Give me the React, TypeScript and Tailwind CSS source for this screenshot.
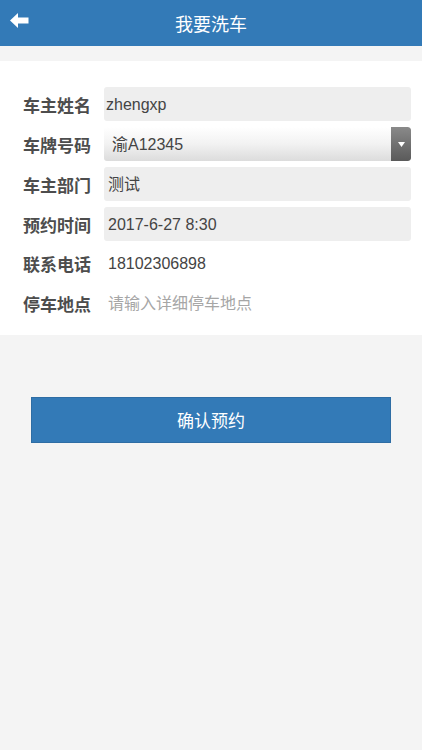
import React from "react";

const font = { fontFamily: '"Noto Sans CJK SC", "Noto Sans", sans-serif' };
const valFont = { fontFamily: '"Liberation Sans", "Noto Sans CJK SC", sans-serif' };

function Row({ label, children, className = "" }: { label: string; children: React.ReactNode; className?: string }) {
  return (
    <div className={`flex items-center h-[34px] ${className}`}>
      <div className="w-[81px] shrink-0 text-[17px] font-bold text-[#4d4d4d] leading-none">{label}</div>
      {children}
    </div>
  );
}

export default function App() {
  return (
    <div className="w-[422px] h-[750px] bg-[#f4f4f4] flex flex-col" style={font}>
      <div className="h-[46px] bg-[#337ab7] flex items-center relative shrink-0">
        <svg className="absolute left-[10px] top-[13px]" width="19" height="15" viewBox="0 0 19 15">
          <path d="M0 7.5 L8 0 L8 4.5 L18.5 4.5 L18.5 10.5 L8 10.5 L8 15 Z" fill="#fff" />
        </svg>
        <div className="flex-1 text-center text-white text-[18px] leading-none">我要洗车</div>
      </div>
      <div className="mt-[15px] bg-white h-[274px] pl-[23px] pr-[11px] pt-[26px] flex flex-col gap-[6px]">
        <Row label="车主姓名">
          <div className="flex-1 h-[34px] bg-[#eeeeee] rounded-[3px] flex items-center pl-[2px] pt-[2px] text-[16px] text-[#444]" style={valFont}>zhengxp</div>
        </Row>
        <Row label="车牌号码">
          <div className="flex-1 h-[34px] rounded-[3px] flex items-stretch overflow-hidden bg-gradient-to-b from-[#ffffff] via-[#f2f2f2] to-[#dcdcdc]">
            <div className="flex-1 flex items-center pl-[8px] pt-[2px] text-[16px] text-[#444]" style={valFont}>渝A12345</div>
            <div className="w-[20px] bg-gradient-to-b from-[#8a8a8a] to-[#5a5a5a] rounded-r-[3px] flex items-center justify-center">
              <svg width="7" height="5" viewBox="0 0 7 5"><path d="M0 0 L7 0 L3.5 5 Z" fill="#fff" /></svg>
            </div>
          </div>
        </Row>
        <Row label="车主部门">
          <div className="flex-1 h-[34px] bg-[#eeeeee] rounded-[3px] flex items-center pl-[4px] pt-[2px] text-[16px] text-[#444]" style={valFont}>测试</div>
        </Row>
        <Row label="预约时间">
          <div className="flex-1 h-[34px] bg-[#eeeeee] rounded-[3px] flex items-center pl-[4px] pt-[2px] text-[16px] text-[#444]" style={valFont}>2017-6-27 8:30</div>
        </Row>
        <Row label="联系电话" className="mt-[-1px]">
          <div className="flex-1 flex items-center pl-[4px] pt-[2px] text-[16px] text-[#444]" style={valFont}>18102306898</div>
        </Row>
        <Row label="停车地点">
          <div className="flex-1 flex items-center pl-[4px] pt-[2px] text-[16px] text-[#a6a6a6]" style={valFont}>请输入详细停车地点</div>
        </Row>
      </div>
      <div className="mt-[62px] mx-[31px] h-[46px] bg-[#337ab7] border border-[#2e6da4] flex items-center justify-center text-white text-[17px]">确认预约</div>
    </div>
  );
}
